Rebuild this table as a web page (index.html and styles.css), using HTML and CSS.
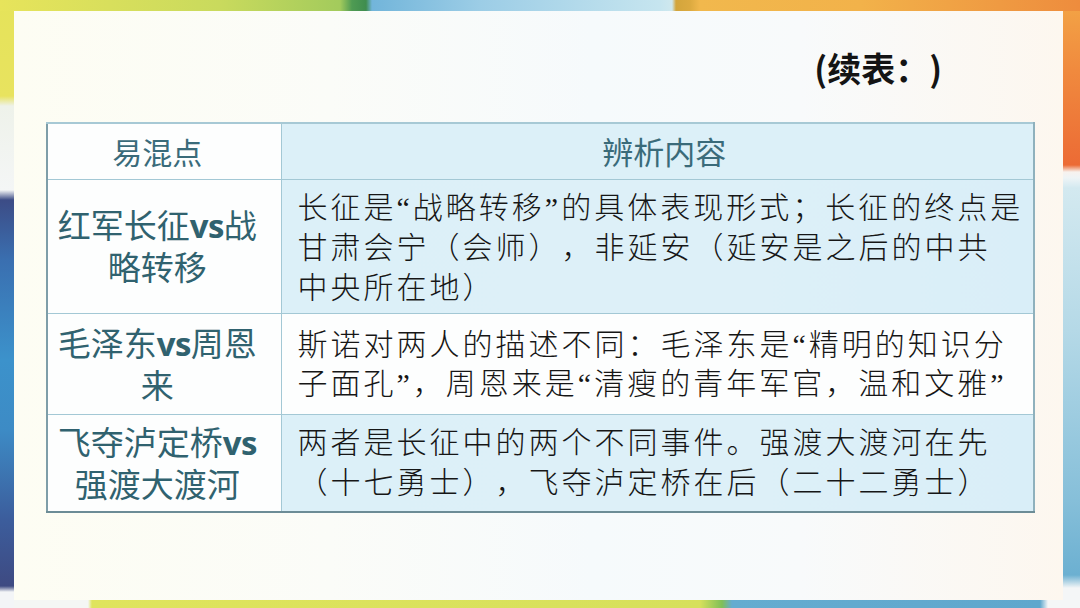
FILE: index.html
```html
<!DOCTYPE html>
<html lang="zh-CN">
<head>
<meta charset="utf-8">
<title>续表</title>
<link rel="stylesheet" href="styles.css">
</head>
<body>
<div class="slide">
  <div class="card">
    <div class="title">(续表：)</div>
    <table class="grid">
      <colgroup><col class="c1"><col class="c2"></colgroup>
      <thead>
        <tr class="r-head">
          <th class="k">易混点</th>
          <th class="v">辨析内容</th>
        </tr>
      </thead>
      <tbody>
        <tr class="r1">
          <td class="k"><span class="ln">红军长征<span class="vs">vs</span>战</span><span class="ln">略转移</span></td>
          <td class="v blue">长征是“战略转移”的具体表现形式；长征的终点是<br>甘肃会宁（会师），非延安（延安是之后的中共<br>中央所在地）</td>
        </tr>
        <tr class="r2">
          <td class="k"><span class="ln">毛泽东<span class="vs">vs</span>周恩</span><span class="ln">来</span></td>
          <td class="v">斯诺对两人的描述不同：毛泽东是“精明的知识分<br>子面孔”，周恩来是“清瘦的青年军官，温和文雅”</td>
        </tr>
        <tr class="r3">
          <td class="k"><span class="ln">飞夺泸定桥<span class="vs">vs</span></span><span class="ln">强渡大渡河</span></td>
          <td class="v blue">两者是长征中的两个不同事件。强渡大渡河在先<br>（十七勇士），飞夺泸定桥在后（二十二勇士）</td>
        </tr>
      </tbody>
    </table>
  </div>
</div>
</body>
</html>
```

FILE: styles.css
```css
html, body {
  margin: 0;
  padding: 0;
  background: #ffffff;
}

.slide {
  width: 1080px;
  height: 608px;
  overflow: hidden;
  box-sizing: border-box;
  padding: 11px 17px 8px 14px;
  display: flex;
  text-spacing-trim: space-all;
  background-color: #f7f9f9;
  background-repeat: no-repeat;
  background-image:
    /* top band */
    linear-gradient(to right, #e7e45b 0px, #c9da5d 220px, #a3cb5c 340px, #4f9b53 352px, #3f8d4f 366px, #72b5da 372px, #9ccde6 480px, #c6e5ef 660px, #cfe8ee 672px, #d3a53c 676px, #dcaa40 690px, #f1b84d 700px, #f2b24a 860px, #ef9a42 1000px, #ee8c3d 1080px),
    /* left band */
    linear-gradient(to bottom, #e5e35a 0px, #e8e35f 96px, #eef2ea 106px, #f4f6f6 190px, #3c4c86 200px, #3a6fb0 260px, #3c92cb 360px, #3d8bc5 430px, #3c5d9c 520px, #3e4a82 586px, #f3f5f7 592px),
    /* right band */
    linear-gradient(to bottom, #f3a546 0px, #f08a3e 70px, #ec6b35 165px, #f7f2ee 172px, #eef4f6 178px, #d3e9f0 188px, #b5d9e7 330px, #86bfd9 500px, #6cb0d1 575px, #f4f6f7 588px),
    /* bottom band */
    linear-gradient(to right, #f4f6f4 0px, #f4f6f4 88px, #dfe45d 92px, #d6e05c 700px, #7fbf58 722px, #64acd0 732px, #5fa7cd 1040px, #f4f6f7 1048px);
  background-size: 1080px 11px, 14px 608px, 17px 608px, 1080px 8px;
  background-position: 0 0, 0 0, 1063px 0, 0 600px;
}

.card {
  flex: 1;
  display: flex;
  flex-direction: column;
  background: linear-gradient(to right, #fdfdf3 0%, #fbfcf8 30%, #f6fafc 55%, #f8fafb 75%, #fdf7ef 100%);
}

.title {
  align-self: flex-end;
  margin: 35px 121px 0 0;
  font-family: "Noto Sans CJK SC", sans-serif;
  font-weight: 700;
  font-size: 34px;
  line-height: 44px;
  color: #141414;
  text-spacing-trim: space-all;
}

.grid {
  margin: 32px 0 0 32px;
  width: 987px;
  border-collapse: collapse;
  table-layout: fixed;
  border-top: 2px solid #a7c9d5;
  border-right: 2px solid #8fb1bd;
  border-bottom: 2px solid #6c8c96;
  border-left: 2px solid #7e9ea8;
}

.c1 { width: 234px; }
.c2 { width: 753px; }

.grid th,
.grid td {
  padding: 0;
  border: 1.5px solid #a3c8d5;
  vertical-align: middle;
  background: #fdfefe;
}

.grid .blue {
  background: linear-gradient(to right, #dcf0f8, #ddf0f8 60%, #d9eef8);
}

.r-head { height: 56px; }
.r1 { height: 134px; }
.r2 { height: 101px; }
.r3 { height: 98px; }

.grid th {
  font-family: "Noto Sans CJK SC", sans-serif;
  font-weight: 400;
  font-size: 30px;
  line-height: 40px;
  color: #3a6b7a;
  text-align: center;
}

.grid th.k {
  padding-right: 14px;
}

.grid th.v {
  background: #dcf0f8;
  padding-left: 14px;
  font-size: 31px;
}

.grid td.k {
  font-family: "Noto Sans CJK SC", sans-serif;
  font-weight: 400;
  font-size: 33px;
  color: #30626f;
  text-align: center;
  white-space: nowrap;
  padding: 0 14px 2px 0;
}

.ln {
  display: block;
  line-height: 40px;
}

.vs {
  font-family: "Open Sans", "Noto Sans", sans-serif;
  font-weight: 700;
  letter-spacing: -0.5px;
}

.grid td.v {
  font-family: "Liberation Serif", "Noto Sans CJK SC", serif;
  font-weight: 300;
  font-size: 30px;
  line-height: 40px;
  letter-spacing: 3px;
  color: #161616;
  text-align: left;
  white-space: nowrap;
  padding-left: 16px;
}

.r1 td.v { padding-top: 3px; }
.r2 td.v { line-height: 39px; }
```
